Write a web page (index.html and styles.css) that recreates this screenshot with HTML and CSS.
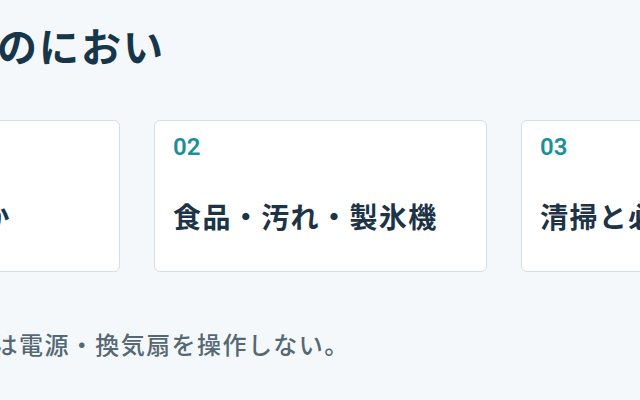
FILE: index.html
```html
<!DOCTYPE html>
<html lang="ja">
<head>
<meta charset="utf-8">
<title>においの対処</title>
<link rel="stylesheet" href="styles.css">
</head>
<body>
<main class="page">
  <h1 class="title">冷蔵庫周りのにおい</h1>
  <section class="cards">
    <article class="card">
      <span class="num">01</span>
      <p class="label">どこのにおいか</p>
    </article>
    <article class="card">
      <span class="num">02</span>
      <p class="label">食品・汚れ・製氷機</p>
    </article>
    <article class="card">
      <span class="num">03</span>
      <p class="label">清掃と必要な換気</p>
    </article>
  </section>
  <p class="note">ガス臭がするときは電源・換気扇を操作しない。</p>
</main>
</body>
</html>
```
FILE: styles.css
```css
html, body {
  margin: 0;
  padding: 0;
  background: #f4f8fa;
  overflow: hidden;
  width: 640px;
  height: 400px;
}
body {
  font-family: "Noto Sans CJK JP", "Noto Sans", sans-serif;
}
.page {
  margin-left: -213px;
  width: 1200px;
  padding-top: 17px;
}
.title {
  margin: 0;
  font-size: 40px;
  line-height: 56px;
  font-weight: 700;
  letter-spacing: 0.05em;
  color: #17364a;
  white-space: nowrap;
}
.cards {
  display: grid;
  grid-template-columns: repeat(3, 333px);
  gap: 34px;
  margin-top: 47px;
}
.card {
  box-sizing: border-box;
  height: 152px;
  background: #ffffff;
  border: 1px solid #d3dfe4;
  border-radius: 6px;
  padding: 11px 18px;
  display: flex;
  flex-direction: column;
}
.num {
  font-family: Roboto, "Noto Sans", sans-serif;
  font-size: 24px;
  line-height: 30px;
  font-weight: 600;
  color: #1a9098;
}
.label {
  margin: 34px 0 0;
  font-size: 28px;
  line-height: 40px;
  font-weight: 700;
  letter-spacing: 0.05em;
  color: #1c3446;
  white-space: nowrap;
}
.note {
  margin: 54px 0 0;
  padding-left: 3px;
  font-size: 24px;
  line-height: 36px;
  font-weight: 500;
  letter-spacing: 0.06em;
  color: #566873;
  white-space: nowrap;
}
```
